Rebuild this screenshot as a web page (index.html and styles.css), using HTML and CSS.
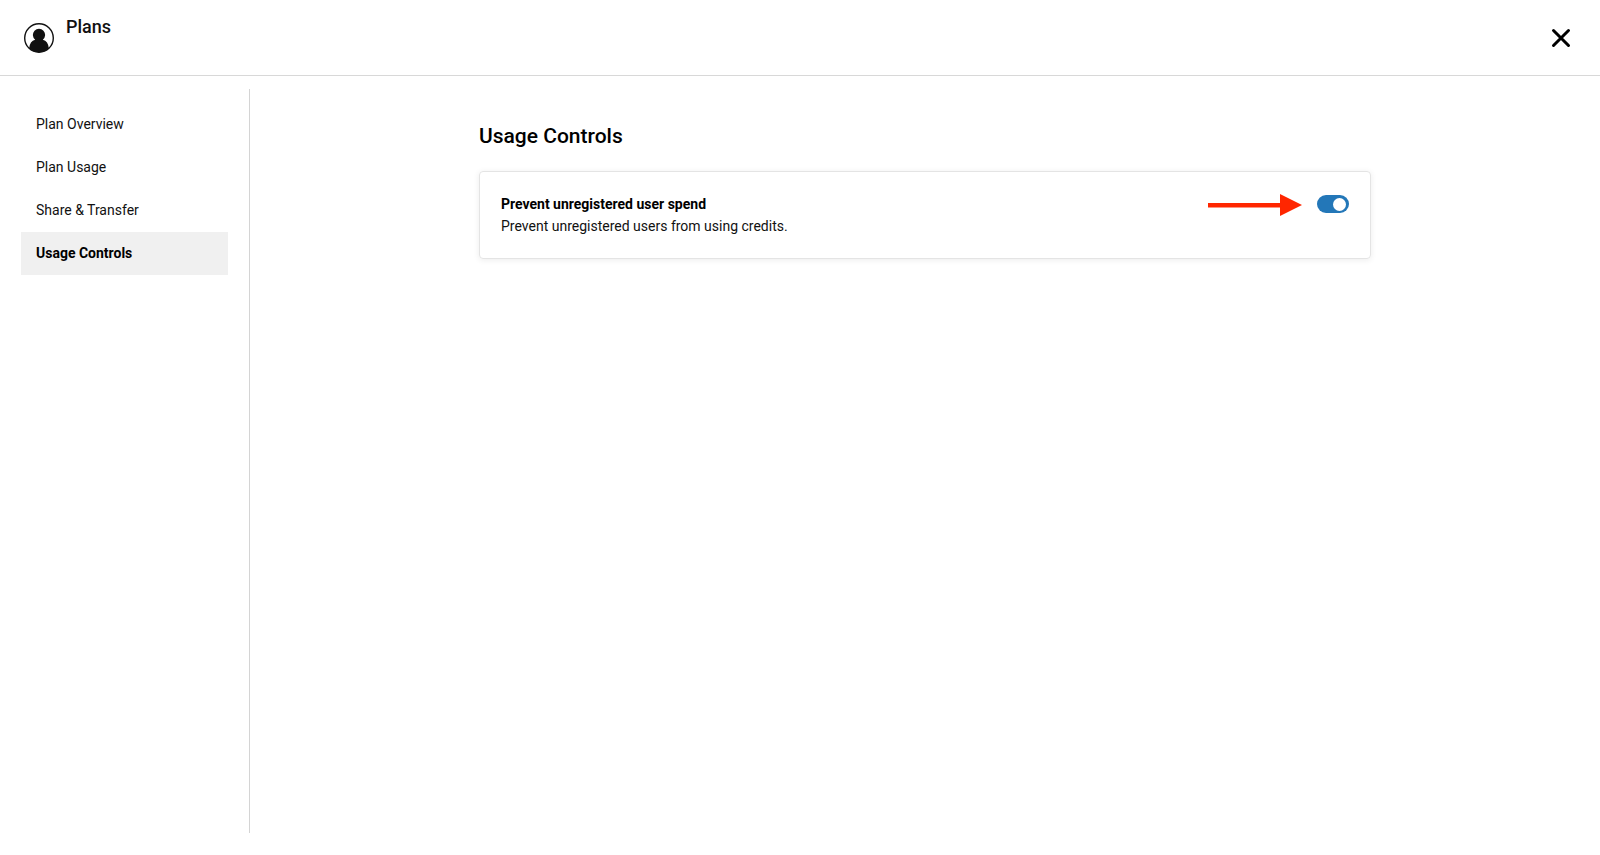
FILE: index.html
```html
<!DOCTYPE html>
<html lang="en">
<head>
  <meta charset="utf-8">
  <title>Plans</title>
  <link rel="stylesheet" href="styles.css">
</head>
<body>
  <header class="header">
    <svg class="avatar" viewBox="0 0 30 30" aria-hidden="true">
      <circle cx="15" cy="15" r="14.3" fill="#fff" stroke="#111" stroke-width="1.4"/>
      <path d="M5.2 25.2C5.6 20.4 7.6 17.6 11.2 16.7A6.1 6.1 0 1 1 18.8 16.7C22.4 17.6 24.4 20.4 24.8 25.2A14 14 0 0 1 5.2 25.2Z" fill="#111"/>
    </svg>
    <h1 class="header-title">Plans</h1>
    <button class="close" type="button" aria-label="Close">
      <svg viewBox="0 0 20 20" width="20" height="20">
        <path d="M2.5 2.5L17.5 17.5M17.5 2.5L2.5 17.5" stroke="#000" stroke-width="3" stroke-linecap="round"/>
      </svg>
    </button>
  </header>

  <div class="layout">
    <nav class="sidebar">
      <a class="nav-item" href="#overview">Plan Overview</a>
      <a class="nav-item" href="#usage">Plan Usage</a>
      <a class="nav-item" href="#share">Share &amp; Transfer</a>
      <a class="nav-item active" href="#controls" aria-current="page">Usage Controls</a>
    </nav>

    <main class="content">
      <h2 class="content-title">Usage Controls</h2>
      <section class="card">
        <div class="setting">
          <label class="setting-name" for="prevent-spend">Prevent unregistered user spend</label>
          <p class="setting-text">Prevent unregistered users from using credits.</p>
        </div>
        <svg class="arrow" viewBox="0 0 94 24" aria-hidden="true">
          <path d="M0 10H72V1L94 12L72 23V14.5H0Z" fill="#ff2600"/>
        </svg>
        <input class="toggle" type="checkbox" role="switch" id="prevent-spend" checked>
      </section>
    </main>
  </div>
</body>
</html>
```

FILE: styles.css
```css
* {
  box-sizing: border-box;
}

body {
  display: flex;
  flex-direction: column;
  min-height: 100vh;
  margin: 0;
  background: #fff;
  color: #111;
  font-family: Roboto, "Liberation Sans", sans-serif;
  font-size: 14px;
  line-height: 22px;
}

.header {
  display: flex;
  align-items: flex-start;
  gap: 12px;
  padding: 16px 21px 19px 24px;
  border-bottom: 1px solid #d8d8d8;
}

.avatar {
  width: 30px;
  height: 30px;
  margin-top: 7px;
}

.header-title {
  margin: 0;
  font-size: 18px;
  font-weight: 500;
  line-height: 22px;
}

.close {
  display: flex;
  margin-left: auto;
  padding: 8px;
  margin-top: 4px;
  border: 0;
  background: none;
  cursor: pointer;
}

.layout {
  display: flex;
  flex: 1;
  padding: 13px 0 22px;
}

.sidebar {
  flex: none;
  width: 250px;
  padding: 14px 21px 0;
  border-right: 1px solid #d4d4d4;
}

.nav-item {
  display: block;
  padding: 10px 15px 11px;
  color: #111;
  text-decoration: none;
}

.nav-item.active {
  background: #f0f0f0;
  color: #000;
  font-weight: 700;
}

.content {
  flex: 1;
  max-width: 892px;
  margin: 0 auto;
  padding-top: 33px;
}

.content-title {
  margin: 0 0 21px;
  color: #000;
  font-size: 21px;
  font-weight: 500;
  line-height: 28px;
}

.card {
  display: flex;
  align-items: flex-start;
  padding: 21px;
  border: 1px solid #e4e4e4;
  border-radius: 4px;
  box-shadow: 0 1px 6px rgba(0, 0, 0, 0.08);
}

.setting {
  flex: 1;
}

.setting-name {
  display: block;
  color: #000;
  font-weight: 700;
}

.setting-text {
  margin: 0;
}

.arrow {
  width: 94px;
  height: 24px;
  margin-right: 15px;
}

.toggle {
  appearance: none;
  display: flex;
  justify-content: flex-end;
  align-items: center;
  width: 32px;
  height: 18px;
  margin: 2px 0 0;
  padding: 0 3px;
  border-radius: 9px;
  background: #2377b8;
  cursor: pointer;
}

.toggle::before {
  content: "";
  width: 13px;
  height: 13px;
  border-radius: 50%;
  background: #fff;
}

.toggle:not(:checked) {
  justify-content: flex-start;
  background: #999;
}
```
